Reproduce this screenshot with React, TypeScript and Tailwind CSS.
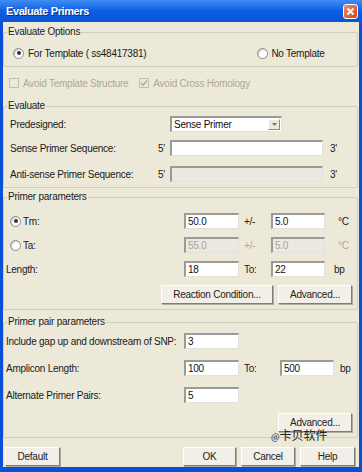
import React from "react";

function Radio({ checked, disabled }: { checked?: boolean; disabled?: boolean }) {
  return (
    <span
      className={`flex h-[11px] w-[11px] shrink-0 items-center justify-center rounded-full border ${
        disabled ? "border-[#c6c3b3] bg-[#f4f3ee]" : "border-[#8d8d8d] bg-white"
      } shadow-[inset_1px_1px_1px_#c8c8c8]`}
    >
      {checked && <span className="h-[4px] w-[4px] rounded-full bg-[#333]" />}
    </span>
  );
}

function Check({ checked }: { checked?: boolean }) {
  return (
    <span className="flex h-[10px] w-[10px] shrink-0 items-center justify-center border border-[#c2bfb0] bg-[#ebe9df]">
      {checked && (
        <svg width="8" height="8" viewBox="0 0 8 8">
          <path d="M1 4 L3 6 L7 1.5" stroke="#b3b0a2" strokeWidth="1.6" fill="none" />
        </svg>
      )}
    </span>
  );
}

function Input({ w, value, disabled }: { w: string; value?: string; disabled?: boolean }) {
  return (
    <div
      className={`${w} flex h-[16px] shrink-0 items-center border-b border-r border-l-2 border-t-2 border-b-[#e4e2d8] border-r-[#e4e2d8] border-l-[#9a9a9a] border-t-[#9a9a9a] pl-[2px] text-[10px] ${
        disabled ? "bg-[#ebe9df] text-[#a9a697]" : "bg-white text-[#111]"
      }`}
    >
      {value}
    </div>
  );
}

function Btn({ w, h, children }: { w: string; h: string; children: React.ReactNode }) {
  return (
    <div
      className={`${w} ${h} flex shrink-0 items-center justify-center border border-b-[#7d7d7d] border-l-white border-r-[#7d7d7d] border-t-white bg-[#f1efe7] text-[10px] leading-[11px] text-[#222] shadow-[1px_1px_0_#b0ad9f]`}
    >
      {children}
    </div>
  );
}

function Group({ label, className, children }: { label: string; className: string; children: React.ReactNode }) {
  return (
    <fieldset className={`w-[355px] rounded-[2px] border border-[#cfcdbf] ${className}`}>
      <legend className="ml-[3px] px-[1px] text-[10px] leading-[12px] text-[#222]">{label}</legend>
      {children}
    </fieldset>
  );
}

export default function App() {
  return (
    <div className="relative h-[472px] w-[362px] bg-[#0b4fd6] font-['Liberation_Sans',Arial,sans-serif] tracking-[-0.25px] text-[#1a1a1a]">
      {/* Title bar */}
      <div className="flex h-[22px] items-center justify-between bg-gradient-to-b from-[#3f8cf3] via-[#0a5ee6] to-[#0a54d4] pl-[6px] pr-[4px]">
        <span className="text-[11px] font-bold tracking-[-0.4px] text-white [text-shadow:1px_1px_0_#0a2d8a]">
          Evaluate Primers
        </span>
        <div className="flex h-[15px] w-[15px] items-center justify-center rounded-[3px] border border-white bg-gradient-to-br from-[#f08a6a] to-[#d2431c]">
          <svg width="9" height="9" viewBox="0 0 9 9">
            <path d="M1.5 1.5 L7.5 7.5 M7.5 1.5 L1.5 7.5" stroke="white" strokeWidth="1.8" />
          </svg>
        </div>
      </div>

      {/* Body */}
      <div className="mx-[3px] flex h-[445px] flex-col bg-[#ece9d8] text-[10px]">
        <Group label="Evaluate Options" className="mt-[4px] pb-[6px]">
          <div className="mt-[8px] flex h-[14px] items-center">
            <div className="ml-[9px] flex items-center gap-[4px]">
              <Radio checked />
              <span>For Template ( ss48417381)</span>
            </div>
            <div className="ml-[111px] flex items-center gap-[3px]">
              <Radio />
              <span>No Template</span>
            </div>
          </div>
        </Group>

        <div className="mt-[9px] flex h-[14px] items-center text-[#aca899]">
          <div className="ml-[6px] flex items-center gap-[4px]">
            <Check />
            <span>Avoid Template Structure</span>
          </div>
          <div className="ml-[11px] flex items-center gap-[4px]">
            <Check checked />
            <span>Avoid Cross Homology</span>
          </div>
        </div>

        <Group label="Evaluate" className="mt-[10px] pb-[5px]">
          <div className="mt-[4px] flex h-[16px] items-center pl-[6px]">
            <span className="w-[160px]">Predesigned:</span>
            <div className="flex h-[16px] w-[112px] items-center justify-between border-b border-r border-l-2 border-t-2 border-b-[#e4e2d8] border-r-[#e4e2d8] border-l-[#9a9a9a] border-t-[#9a9a9a] bg-white pl-[2px] pr-[1px]">
              <span className="text-[#111]">Sense Primer</span>
              <div className="flex h-[11px] w-[12px] items-center justify-center border border-b-[#8a8a8a] border-l-white border-r-[#8a8a8a] border-t-white bg-[#ece9d8]">
                <svg width="5" height="3" viewBox="0 0 5 3">
                  <path d="M0 0 H5 L2.5 3 Z" fill="#777" />
                </svg>
              </div>
            </div>
          </div>
          <div className="mt-[8px] flex h-[16px] items-center pl-[6px]">
            <span className="w-[148px]">Sense Primer Sequence:</span>
            <span className="w-[12px]">5'</span>
            <Input w="w-[153px]" />
            <span className="ml-[7px]">3'</span>
          </div>
          <div className="mt-[10px] flex h-[16px] items-center pl-[6px]">
            <span className="w-[148px]">Anti-sense Primer Sequence:</span>
            <span className="w-[12px]">5'</span>
            <Input w="w-[153px]" disabled />
            <span className="ml-[7px]">3'</span>
          </div>
        </Group>

        <Group label="Primer parameters" className="mt-[3px] pb-[5px]">
          <div className="mt-[10px] flex h-[16px] items-center">
            <div className="flex w-[180px] items-center gap-[2px] pl-[6px]">
              <Radio checked />
              <span>Tm:</span>
            </div>
            <Input w="w-[55px]" value="50.0" />
            <span className="ml-[5px] w-[27px]">+/-</span>
            <Input w="w-[54px]" value="5.0" />
            <span className="ml-[13px]">°C</span>
          </div>
          <div className="mt-[8px] flex h-[16px] items-center">
            <div className="flex w-[180px] items-center gap-[2px] pl-[6px]">
              <Radio />
              <span>Ta:</span>
            </div>
            <Input w="w-[55px]" value="55.0" disabled />
            <span className="ml-[5px] w-[27px] text-[#aca899]">+/-</span>
            <Input w="w-[54px]" value="5.0" disabled />
            <span className="ml-[13px] text-[#aca899]">°C</span>
          </div>
          <div className="mt-[8px] flex h-[16px] items-center">
            <span className="w-[180px] pl-[2px]">Length:</span>
            <Input w="w-[55px]" value="18" />
            <span className="ml-[5px] w-[27px]">To:</span>
            <Input w="w-[54px]" value="22" />
            <span className="ml-[9px]">bp</span>
          </div>
          <div className="mt-[8px] flex justify-end gap-[5px] pr-[5px]">
            <Btn w="w-[112px]" h="h-[19px]">Reaction Condition...</Btn>
            <Btn w="w-[74px]" h="h-[19px]">Advanced...</Btn>
          </div>
        </Group>

        <Group label="Primer pair parameters" className="mt-[6px] pb-[5px]">
          <div className="mt-[5px] flex h-[16px] items-center">
            <span className="w-[180px] pl-[2px]">Include gap up and downstream of SNP:</span>
            <Input w="w-[55px]" value="3" />
          </div>
          <div className="mt-[11px] flex h-[16px] items-center">
            <span className="w-[180px] pl-[2px]">Amplicon Length:</span>
            <Input w="w-[55px]" value="100" />
            <span className="ml-[5px] w-[36px]">To:</span>
            <Input w="w-[54px]" value="500" />
            <span className="ml-[6px]">bp</span>
          </div>
          <div className="mt-[11px] flex h-[16px] items-center">
            <span className="w-[180px] pl-[2px]">Alternate Primer Pairs:</span>
            <Input w="w-[55px]" value="5" />
          </div>
          <div className="mt-[10px] flex justify-end pr-[5px]">
            <Btn w="w-[74px]" h="h-[19px]">Advanced...</Btn>
          </div>
        </Group>

        <div className="mt-[9px] flex items-center">
          <div className="ml-[2px]">
            <Btn w="w-[55px]" h="h-[19px]">Default</Btn>
          </div>
          <div className="ml-[123px] flex gap-[5px]">
            <Btn w="w-[53px]" h="h-[19px]">OK</Btn>
            <Btn w="w-[54px]" h="h-[19px]">Cancel</Btn>
            <Btn w="w-[55px]" h="h-[19px]">Help</Btn>
          </div>
        </div>
      </div>

      {/* Watermark overlay */}
      <div className="absolute left-[271px] top-[429px] font-['Noto_Sans_CJK_SC',sans-serif] text-[12px] leading-[12px] tracking-normal text-[#222]">
        <span className="text-[9px]">@</span>卡贝软件
      </div>
    </div>
  );
}
